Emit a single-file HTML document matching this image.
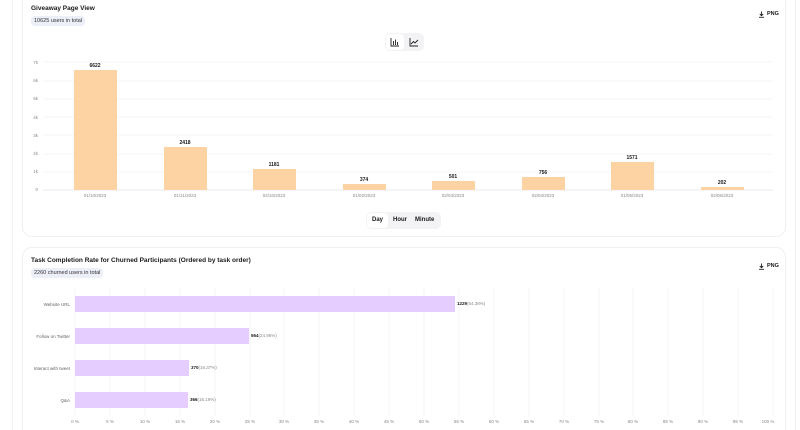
<!DOCTYPE html><html style="width:800px;height:430px;overflow:hidden"><head><style>
*{margin:0;padding:0;box-sizing:border-box}
body{width:800px;height:430px;background:#fff;font-family:"Liberation Sans",sans-serif;position:relative;overflow:hidden;color:#1a1a1a}
.card{position:absolute;left:22px;width:764px;border:1px solid #eef0f4;border-radius:10px;background:#fff}
.t{position:absolute;font-size:6.5px;font-weight:bold}
.pill{position:absolute;font-size:5.5px;background:#eceef8;border-radius:4px;padding:2px 3px;color:#333}
.abs{position:absolute}
.yl{position:absolute;font-size:4.5px;color:#888;width:10px;text-align:right}
.xl{position:absolute;font-size:4.5px;color:#888;width:40px;text-align:center}
.bar{position:absolute;background:#fdd3a4}
.v{position:absolute;font-size:5px;font-weight:bold;width:40px;text-align:center}
.hb{position:absolute;background:#e5ceff;height:16px;left:75px}
</style></head><body>
<div class="abs" style="left:12px;top:0;width:1px;height:430px;background:#f3f3f5"></div>
<div class="abs" style="left:795px;top:0;width:1px;height:430px;background:#eeeef2"></div>
<div class="card" style="top:-10px;height:247px"></div>
<div class="t" style="left:31px;top:5px">Giveaway Page View</div>
<div class="pill" style="left:31px;top:16px">10625 users in total</div>
<svg class="abs" style="left:758px;top:11px" width="7" height="7" viewBox="0 0 7 7"><path d="M3.5 0.5V4.5M1.8 3L3.5 4.7 5.2 3M1 6.3H6" stroke="#222" stroke-width="0.9" fill="none"/></svg>
<div class="abs" style="left:767px;top:11px;font-size:5.5px;font-weight:bold">PNG</div>
<div class="abs" style="left:385px;top:33px;width:39px;height:18px;background:#f3f3f5;border-radius:5px"></div>
<div class="abs" style="left:386px;top:34px;width:18px;height:16px;background:#fff;border-radius:4px"></div>
<svg class="abs" style="left:390px;top:37px" width="10" height="10" viewBox="0 0 10 10"><path d="M1 1V9H9M3.5 8V4M5.5 8V2.5M7.5 8V5" stroke="#222" stroke-width="0.9" fill="none"/></svg>
<svg class="abs" style="left:409px;top:37px" width="10" height="10" viewBox="0 0 10 10"><path d="M1 1V9H9M2 7L4.5 4.5 6 6 9 3" stroke="#222" stroke-width="0.9" fill="none"/></svg>
<svg class="abs" style="left:0;top:0" width="800" height="230">
<g stroke="#eef0f4" stroke-width="0.7">
<line x1="43" x2="773" y1="62" y2="62"/><line x1="43" x2="773" y1="81" y2="81"/><line x1="43" x2="773" y1="99" y2="99"/><line x1="43" x2="773" y1="117" y2="117"/><line x1="43" x2="773" y1="135" y2="135"/><line x1="43" x2="773" y1="154" y2="154"/><line x1="43" x2="773" y1="172" y2="172"/><line x1="43" x2="773" y1="190" y2="190" stroke="#e0e4ee"/></g></svg>
<div class="yl" style="left:28px;top:60px">7k</div><div class="yl" style="left:28px;top:78px">6k</div><div class="yl" style="left:28px;top:96px">5k</div><div class="yl" style="left:28px;top:115px">4k</div><div class="yl" style="left:28px;top:133px">3k</div><div class="yl" style="left:28px;top:151px">2k</div><div class="yl" style="left:28px;top:169px">1k</div><div class="yl" style="left:28px;top:187px">0</div>
<div class="bar" style="left:74px;top:70px;width:43px;height:120px"></div><div class="v" style="left:75px;top:63px">6622</div><div class="xl" style="left:75px;top:193px">01/10/2023</div>
<div class="bar" style="left:164px;top:147px;width:43px;height:43px"></div><div class="v" style="left:165px;top:140px">2418</div><div class="xl" style="left:165px;top:193px">01/11/2023</div>
<div class="bar" style="left:253px;top:169px;width:43px;height:21px"></div><div class="v" style="left:254px;top:162px">1181</div><div class="xl" style="left:254px;top:193px">02/10/2023</div>
<div class="bar" style="left:343px;top:184px;width:43px;height:6px"></div><div class="v" style="left:344px;top:177px">374</div><div class="xl" style="left:344px;top:193px">01/02/2023</div>
<div class="bar" style="left:432px;top:181px;width:43px;height:9px"></div><div class="v" style="left:433px;top:174px">501</div><div class="xl" style="left:433px;top:193px">02/03/2023</div>
<div class="bar" style="left:522px;top:177px;width:43px;height:13px"></div><div class="v" style="left:523px;top:170px">756</div><div class="xl" style="left:523px;top:193px">02/04/2023</div>
<div class="bar" style="left:611px;top:162px;width:43px;height:28px"></div><div class="v" style="left:612px;top:155px">1571</div><div class="xl" style="left:612px;top:193px">01/05/2023</div>
<div class="bar" style="left:701px;top:187px;width:43px;height:3px"></div><div class="v" style="left:702px;top:180px">202</div><div class="xl" style="left:702px;top:193px">02/06/2023</div>
<div class="abs" style="left:366px;top:212px;width:75px;height:17px;background:#f3f3f5;border-radius:5px;font-size:6px;font-weight:bold;line-height:17px">
<span style="display:inline-block;background:#fff;border-radius:4px;margin-left:1px;padding:0 5px;line-height:15px">Day</span><span style="margin-left:5px">Hour</span><span style="margin-left:8px">Minute</span></div>

<div class="card" style="top:247px;height:200px"></div>
<div class="t" style="left:31px;top:257px">Task Completion Rate for Churned Participants (Ordered by task order)</div>
<div class="pill" style="left:31px;top:268px">2260 churned users in total</div>
<svg class="abs" style="left:758px;top:263px" width="7" height="7" viewBox="0 0 7 7"><path d="M3.5 0.5V4.5M1.8 3L3.5 4.7 5.2 3M1 6.3H6" stroke="#222" stroke-width="0.9" fill="none"/></svg>
<div class="abs" style="left:767px;top:263px;font-size:5.5px;font-weight:bold">PNG</div>
<svg class="abs" style="left:0;top:0" width="800" height="430"><g stroke="#eef0f4" stroke-width="0.7">
<line x1="75" x2="75" y1="288" y2="416"/><line x1="110" x2="110" y1="288" y2="416"/><line x1="145" x2="145" y1="288" y2="416"/><line x1="180" x2="180" y1="288" y2="416"/><line x1="215" x2="215" y1="288" y2="416"/><line x1="250" x2="250" y1="288" y2="416"/><line x1="284" x2="284" y1="288" y2="416"/><line x1="319" x2="319" y1="288" y2="416"/><line x1="354" x2="354" y1="288" y2="416"/><line x1="389" x2="389" y1="288" y2="416"/><line x1="424" x2="424" y1="288" y2="416"/><line x1="459" x2="459" y1="288" y2="416"/><line x1="494" x2="494" y1="288" y2="416"/><line x1="529" x2="529" y1="288" y2="416"/><line x1="564" x2="564" y1="288" y2="416"/><line x1="599" x2="599" y1="288" y2="416"/><line x1="633" x2="633" y1="288" y2="416"/><line x1="668" x2="668" y1="288" y2="416"/><line x1="703" x2="703" y1="288" y2="416"/><line x1="738" x2="738" y1="288" y2="416"/><line x1="773" x2="773" y1="288" y2="416"/></g>
<g font-size="4.5" fill="#888" text-anchor="middle" font-family="Liberation Sans">
<text x="75" y="423">0 %</text><text x="110" y="423">5 %</text><text x="145" y="423">10 %</text><text x="180" y="423">15 %</text><text x="215" y="423">20 %</text><text x="250" y="423">25 %</text><text x="284" y="423">30 %</text><text x="319" y="423">35 %</text><text x="354" y="423">40 %</text><text x="389" y="423">45 %</text><text x="424" y="423">50 %</text><text x="459" y="423">55 %</text><text x="494" y="423">60 %</text><text x="529" y="423">65 %</text><text x="564" y="423">70 %</text><text x="599" y="423">75 %</text><text x="633" y="423">80 %</text><text x="668" y="423">85 %</text><text x="703" y="423">90 %</text><text x="738" y="423">95 %</text><text x="768" y="423">100 %</text></g>
<g font-size="4.5" fill="#666" text-anchor="end" font-family="Liberation Sans">
<text x="70" y="306">Website URL</text><text x="70" y="338">Follow on Twitter</text><text x="70" y="370">Interact with tweet</text><text x="70" y="402">Q&amp;A</text></g></svg>
<div class="hb" style="top:296px;width:380px"></div>
<div class="hb" style="top:328px;width:174px"></div>
<div class="hb" style="top:360px;width:114px"></div>
<div class="hb" style="top:392px;width:113px"></div>
<div class="abs" style="left:457px;top:301px;font-size:4.5px"><b>1229</b><span style="color:#888">(54.38%)</span></div>
<div class="abs" style="left:251px;top:333px;font-size:4.5px"><b>564</b><span style="color:#888">(24.96%)</span></div>
<div class="abs" style="left:191px;top:365px;font-size:4.5px"><b>370</b><span style="color:#888">(16.37%)</span></div>
<div class="abs" style="left:190px;top:397px;font-size:4.5px"><b>366</b><span style="color:#888">(16.19%)</span></div>
</body></html>
